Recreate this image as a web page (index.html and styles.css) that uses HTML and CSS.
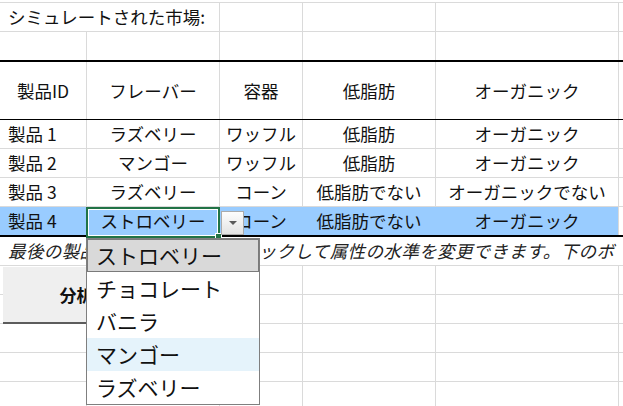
FILE: index.html
```html
<!DOCTYPE html>
<html lang="ja">
<head>
	<meta charset="UTF-8">
	<title>シミュレートされた市場</title>
	<link rel="stylesheet" href="styles.css">
</head>
<body>
	<div id="sheet">
		<div class="row">
			<div class="cell span2 left">シミュレートされた市場:</div>
			<div class="cell"></div>
			<div class="cell"></div>
			<div class="cell"></div>
			<div class="cell"></div>
		</div>
		<div class="row rule-thick">
			<div class="cell"></div>
			<div class="cell"></div>
			<div class="cell"></div>
			<div class="cell"></div>
			<div class="cell"></div>
			<div class="cell"></div>
		</div>
		<div class="row head">
			<div class="cell">製品ID</div>
			<div class="cell">フレーバー</div>
			<div class="cell">容器</div>
			<div class="cell">低脂肪</div>
			<div class="cell">オーガニック</div>
			<div class="cell"></div>
		</div>
		<div class="row">
			<div class="cell left">製品 1</div>
			<div class="cell">ラズベリー</div>
			<div class="cell">ワッフル</div>
			<div class="cell">低脂肪</div>
			<div class="cell">オーガニック</div>
			<div class="cell"></div>
		</div>
		<div class="row">
			<div class="cell left">製品 2</div>
			<div class="cell">マンゴー</div>
			<div class="cell">ワッフル</div>
			<div class="cell">低脂肪</div>
			<div class="cell">オーガニック</div>
			<div class="cell"></div>
		</div>
		<div class="row">
			<div class="cell left">製品 3</div>
			<div class="cell">ラズベリー</div>
			<div class="cell">コーン</div>
			<div class="cell">低脂肪でない</div>
			<div class="cell">オーガニックでない</div>
			<div class="cell"></div>
		</div>
		<div class="row rule-thick picked">
			<div class="cell left">製品 4</div>
			<div class="cell">ストロベリー</div>
			<div class="cell">コーン</div>
			<div class="cell">低脂肪でない</div>
			<div class="cell">オーガニック</div>
			<div class="cell"></div>
		</div>
		<div class="row">
			<div class="cell note">最後の製品の属性のセルをクリックして属性の水準を変更できます。下のボ</div>
		</div>
		<div class="row"><div class="cell"></div><div class="cell"></div><div class="cell"></div><div class="cell"></div><div class="cell"></div><div class="cell"></div></div>
		<div class="row"><div class="cell"></div><div class="cell"></div><div class="cell"></div><div class="cell"></div><div class="cell"></div><div class="cell"></div></div>
		<div class="row"><div class="cell"></div><div class="cell"></div><div class="cell"></div><div class="cell"></div><div class="cell"></div><div class="cell"></div></div>
		<div class="row"><div class="cell"></div><div class="cell"></div><div class="cell"></div><div class="cell"></div><div class="cell"></div><div class="cell"></div></div>
		<div class="row"><div class="cell"></div><div class="cell"></div><div class="cell"></div><div class="cell"></div><div class="cell"></div><div class="cell"></div></div>
	</div>

	<button id="run">分析を実行</button>

	<!-- 選択中のセルとドロップダウン -->
	<div id="selbox"><span class="handle"></span></div>
	<div id="ddbtn"><span class="tri"></span></div>
	<ul id="ddlist">
		<li class="current">ストロベリー</li>
		<li>チョコレート</li>
		<li>バニラ</li>
		<li class="hover">マンゴー</li>
		<li>ラズベリー</li>
	</ul>
</body>
</html>
```

FILE: styles.css
```css
html, body {
	margin: 0;
	padding: 0;
	overflow: hidden;
	background: #fff;
}
body {
	font-size: 17.5px;
	font-family: "Noto Sans CJK JP", "Noto Sans", sans-serif;
	color: #111;
}
ul {
	padding: 0;
	margin: 0;
	list-style: none;
}
#sheet {
	margin-top: 2px;
	border-top: 1px solid #dadada;
	width: 640px;
}
.row {
	display: grid;
	grid-template-columns: 87px 133px 83px 133px 183px 1fr;
	height: 29px;
	box-sizing: border-box;
	border-bottom: 1px solid #dadada;
}
.row.rule-thick {
	height: 30px;
	border-bottom: 2px solid #000;
}
.row.head {
	height: 58px;
	border-bottom: 1px solid #000;
}
.cell {
	display: flex;
	align-items: center;
	justify-content: center;
	border-right: 1px solid #dadada;
	white-space: nowrap;
	overflow: visible;
	line-height: 1;
}
.cell.left {
	justify-content: flex-start;
	padding-left: 8px;
}
.cell.span2 {
	grid-column: span 2;
}
.cell.note {
	grid-column: 1 / -1;
	justify-content: flex-start;
	padding-left: 8px;
	border-right: 0;
	font-style: italic;
	letter-spacing: 0.4px;
	color: #222;
}
.picked .cell {
	background: #99ccff;
	border-right-color: #99ccff;
}
.picked .cell:nth-child(5) {
	border-right-color: #dadada;
}
.picked .cell:last-child {
	background: #fff;
}
#run {
	position: absolute;
	left: 3px;
	top: 267px;
	width: 199px;
	height: 57px;
	margin: 0;
	padding: 0;
	border: 0;
	border-bottom: 2px solid #5c5c5c;
	border-right: 1px solid #9a9a9a;
	background: #efefef;
	font-family: "Noto Sans CJK JP", sans-serif;
	font-size: 17px;
	font-weight: bold;
	color: #111;
}
#selbox {
	position: absolute;
	left: 86px;
	top: 207px;
	width: 134px;
	height: 31px;
	box-sizing: border-box;
	border: 2px solid #217346;
	box-shadow: inset 0 0 0 1px #fff;
}
#selbox .handle {
	position: absolute;
	right: -4px;
	bottom: -4px;
	width: 5px;
	height: 5px;
	background: #217346;
	border: 1px solid #fff;
}
#ddbtn {
	position: absolute;
	left: 221px;
	top: 211px;
	width: 23px;
	height: 24px;
	box-sizing: border-box;
	border: 1px solid #ababab;
	background: linear-gradient(#fdfdfd, #e3e3e3);
	display: flex;
	align-items: center;
	justify-content: center;
}
#ddbtn .tri {
	width: 0;
	height: 0;
	border-left: 4.5px solid transparent;
	border-right: 4.5px solid transparent;
	border-top: 4.5px solid #5a5a5a;
}
#ddlist {
	position: absolute;
	left: 86px;
	top: 238px;
	width: 174px;
	box-sizing: border-box;
	border: 1px solid #7f7f7f;
	background: #fff;
}
#ddlist li {
	height: 33px;
	line-height: 33px;
	padding-left: 9px;
	font-size: 21px;
	color: #111;
	white-space: nowrap;
}
#ddlist li.current {
	background: #d9d9d9;
	box-shadow: inset 0 0 0 1px #7a7a7a;
}
#ddlist li.hover {
	background: #e5f3fb;
}
```
